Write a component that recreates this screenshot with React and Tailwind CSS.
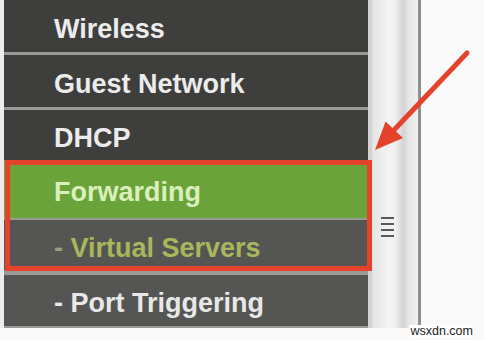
const menu = [
  { label: 'Wireless', h: 'h-[52px]', bg: 'bg-[#3e3f3c]', text: 'text-[#ececec]' },
  { label: 'Guest Network', h: 'h-[52px]', bg: 'bg-[#3e3f3c]', text: 'text-[#ececec]' },
  { label: 'DHCP', h: 'h-[50px]', bg: 'bg-[#3e3f3c]', text: 'text-[#ececec]' },
];

function Row({ label, h, bg, text }) {
  return (
    <div className={`flex items-center pl-[50px] pt-[6px] ${h} ${bg}`}>
      <span className={`text-[27px] font-bold leading-none ${text}`}>{label}</span>
    </div>
  );
}

function Scrollbar() {
  return (
    <div className="flex h-full">
      <div className="w-[4px] bg-[#d2d2d2]" />
      <div className="relative w-[46px] bg-[linear-gradient(to_right,#e4e4e4_0%,#f3f3f3_35%,#f1f1f1_50%,#d3d3d3_68%,#e6e6e6_80%,#f0f0f0_100%)]">
        <div className="absolute left-[9px] top-[217px] flex flex-col gap-[4px]">
          <div className="h-[2px] w-[13px] bg-[#5a5a5a]" />
          <div className="h-[2px] w-[13px] bg-[#5a5a5a]" />
          <div className="h-[2px] w-[13px] bg-[#5a5a5a]" />
          <div className="h-[2px] w-[13px] bg-[#5a5a5a]" />
        </div>
      </div>
      <div className="w-[3px] bg-[#8e8e8e]" />
    </div>
  );
}

export default function App() {
  return (
    <div className="relative h-[340px] w-[484px] overflow-hidden bg-[#fafafa] font-['Liberation_Sans',Arial,sans-serif]">
      <div className="flex h-[328px]">
        <div className="w-[4px] bg-[#ececec]" />
        <div className="flex w-[364px] flex-col bg-[#9a9b98]">
          {menu.map((m, i) => (
            <div key={m.label} className={i < 2 ? 'mb-[3px]' : ''}>
              <Row {...m} />
            </div>
          ))}
          <Row label="Forwarding" h="h-[58px]" bg="bg-[#6aa33a]" text="text-[#d9f0bb]" />
          <div className="mt-[2px] flex h-[50px] items-center bg-[#555653] pl-[50px] pt-[6px]">
            <span className="text-[27px] font-bold leading-none text-[#a9b65b]">
              <span className="text-[#9aa07a]">- </span>Virtual Servers
            </span>
          </div>
          <div className="mt-[5px] h-[51px]">
            <Row label="- Port Triggering" h="h-[51px]" bg="bg-[#555653]" text="text-[#e8e8e8]" />
          </div>
        </div>
        <Scrollbar />
      </div>

      <div className="absolute left-[5px] top-[160px] h-[111px] w-[367px] border-[5px] border-[#e5422b]" />

      <svg className="absolute left-0 top-0" width="484" height="340" viewBox="0 0 484 340">
        <line x1="467" y1="53" x2="394" y2="130" stroke="#e5422b" strokeWidth="5" strokeLinecap="round" />
        <polygon points="375,150 385.6,121.4 403,138" fill="#e5422b" />
      </svg>

      <div className="absolute bottom-[3px] right-[10px] bg-white px-[1px] text-[12.5px] leading-none text-[#222]">
        wsxdn.com
      </div>
    </div>
  );
}
